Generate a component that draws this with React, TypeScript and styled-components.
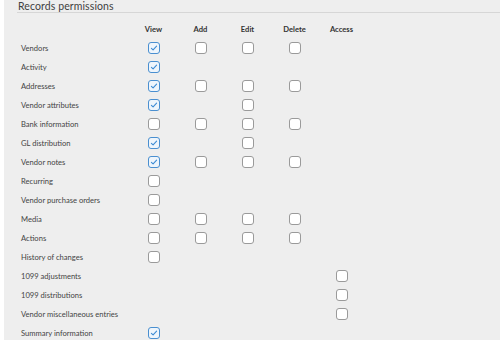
import React from "react";
import styled, { createGlobalStyle } from "styled-components";

const GlobalStyle = createGlobalStyle`
  html, body {
    margin: 0;
    padding: 0;
    background: #ffffff;
  }
  body {
    font-family: Lato, "Open Sans", sans-serif;
  }
`;

type Perm = boolean | null;

// view, add, edit, delete, access — null means no box in that column
const rows: { label: string; perms: Perm[] }[] = [
  { label: "Vendors", perms: [true, false, false, false, null] },
  { label: "Activity", perms: [true, null, null, null, null] },
  { label: "Addresses", perms: [true, false, false, false, null] },
  { label: "Vendor attributes", perms: [true, null, false, null, null] },
  { label: "Bank information", perms: [false, false, false, false, null] },
  { label: "GL distribution", perms: [true, null, false, null, null] },
  { label: "Vendor notes", perms: [true, false, false, false, null] },
  { label: "Recurring", perms: [false, null, null, null, null] },
  { label: "Vendor purchase orders", perms: [false, null, null, null, null] },
  { label: "Media", perms: [false, false, false, false, null] },
  { label: "Actions", perms: [false, false, false, false, null] },
  { label: "History of changes", perms: [false, null, null, null, null] },
  { label: "1099 adjustments", perms: [null, null, null, null, false] },
  { label: "1099 distributions", perms: [null, null, null, null, false] },
  { label: "Vendor miscellaneous entries", perms: [null, null, null, null, false] },
  { label: "Summary information", perms: [true, null, null, null, null] },
];

const columns = ["View", "Add", "Edit", "Delete", "Access"];

const Checkbox = ({ checked }: { checked: boolean }) => (
  <Box $checked={checked}>
    {checked && (
      <svg width="8" height="8" viewBox="0 0 8 8">
        <path
          d="M1.4 4.3 L3.1 5.9 L6.6 2.2"
          fill="none"
          stroke="#3d8bd4"
          strokeWidth="1.1"
          strokeLinecap="round"
          strokeLinejoin="round"
        />
      </svg>
    )}
  </Box>
);

const App = () => {
  return (
    <>
      <GlobalStyle />
      <Page>
        <Panel>
          <Title>Records permissions</Title>
          <Table>
            <Row>
              <Label />
              {columns.map((c) => (
                <Head key={c}>{c}</Head>
              ))}
            </Row>
            {rows.map((r) => (
              <Row key={r.label}>
                <Label>{r.label}</Label>
                {r.perms.map((p, i) => (
                  <Cell key={i}>{p !== null && <Checkbox checked={p} />}</Cell>
                ))}
              </Row>
            ))}
          </Table>
        </Panel>
      </Page>
    </>
  );
};

export default App;

const Page = styled.div`
  width: 500px;
  height: 343px;
  padding: 0 0 3px 4px;
  box-sizing: border-box;
  background: #ffffff;
  overflow: hidden;
`;

const Panel = styled.div`
  height: 100%;
  background: #eeeeee;
  padding-left: 13px;
  box-sizing: border-box;
`;

const Title = styled.div`
  height: 12px;
  line-height: 12px;
  font-size: 10.5px;
  color: #3f3f3f;
  padding-left: 1px;
  border-bottom: 1px solid #d6d6d6;
  letter-spacing: 0.1px;
`;

const Table = styled.div`
  padding-top: 6px;
  padding-left: 4px;
  display: flex;
  flex-direction: column;
`;

const Row = styled.div`
  display: grid;
  grid-template-columns: 109px repeat(5, 47px);
  height: 19px;
  align-items: center;
`;

const Label = styled.div`
  font-size: 7.6px;
  color: #444444;
  white-space: nowrap;
`;

const Head = styled.div`
  font-size: 7.6px;
  font-weight: 700;
  color: #333333;
  text-align: center;
`;

const Cell = styled.div`
  display: flex;
  justify-content: center;
  align-items: center;
`;

const Box = styled.div<{ $checked: boolean }>`
  width: 12px;
  height: 12px;
  box-sizing: border-box;
  border-radius: 3px;
  border: 1px solid ${(p) => (p.$checked ? "#4a8fd0" : "#9a9a9a")};
  background: ${(p) => (p.$checked ? "#eef5fc" : "#ffffff")};
  display: flex;
  align-items: center;
  justify-content: center;
`;
